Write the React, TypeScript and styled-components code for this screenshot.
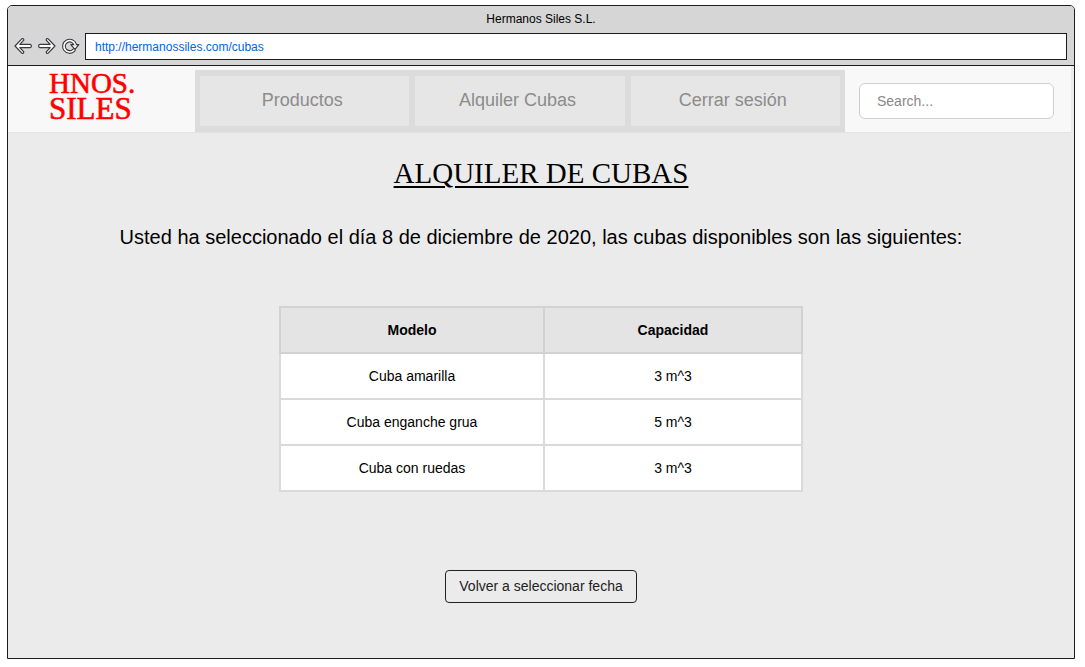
import React from "react";
import styled, { createGlobalStyle } from "styled-components";

const GlobalStyle = createGlobalStyle`
  * { box-sizing: border-box; }
  body {
    margin: 0;
    background: #fff;
    color: #000;
    font-family: "Liberation Sans", Arial, sans-serif;
    font-size: 14px;
  }
`;

const Window = styled.div`
  display: flex;
  flex-direction: column;
  min-height: calc(100vh - 13px);
  margin: 5px 10px 8px 7px;
  border: 1px solid #1c1c20;
  border-radius: 5px 5px 0 0;
  background: #ebebeb;
  overflow: hidden;
`;

const Chrome = styled.header`
  padding-bottom: 5px;
  background: #d6d6d6;
  border-bottom: 1px solid #1c1c20;
`;

const WindowTitle = styled.div`
  height: 27px;
  line-height: 26px;
  font-size: 12px;
  text-align: center;
`;

const AddressRow = styled.div`
  display: flex;
  align-items: center;
  padding: 0 7px 0 5px;
`;

const IconButton = styled.button`
  display: flex;
  width: 20px;
  height: 20px;
  margin: 0 4px 1px 0;
  padding: 0;
  border: 0;
  background: none;
`;

const AddressInput = styled.input`
  flex: 1;
  min-width: 0;
  height: 27px;
  padding: 0 9px;
  border: 1px solid #1c1c20;
  border-radius: 0;
  background: #fff;
  color: #0066dd;
  font: 12px "Liberation Sans", Arial, sans-serif;
  outline: none;
`;

const TopBar = styled.div`
  display: flex;
  align-items: flex-end;
  height: 67px;
  margin-right: 3px;
  background: #f8f8f8;
  border-bottom: 1px solid #e2e2e2;
`;

const Logo = styled.a`
  display: flex;
  width: 187px;
  height: 62px;
  padding-left: 41px;
`;

const LogoText = styled.text`
  fill: #ff0000;
  stroke: #ff0000;
  stroke-width: 0.6px;
  font-family: "Liberation Serif", "Times New Roman", serif;
`;

const Nav = styled.nav`
  display: flex;
  flex: 1;
  gap: 6px;
  padding: 6px 5px 6px 5px;
  background: #dcdcdc;
`;

const NavLink = styled.a`
  display: flex;
  flex: 1;
  align-items: center;
  justify-content: center;
  height: 50px;
  padding: 0 5px 2px 0;
  background: #e6e6e6;
  color: #8c8c8c;
  font-size: 18px;
  text-decoration: none;
`;

const SearchForm = styled.form`
  align-self: center;
  width: 226px;
  padding: 4px 17px 0 14px;
`;

const SearchInput = styled.input`
  display: block;
  width: 100%;
  height: 36px;
  padding: 0 17px;
  border: 1px solid #cfcfcf;
  border-radius: 6px;
  background: #fff;
  font: 14px "Liberation Sans", Arial, sans-serif;
  outline: none;
  &::placeholder { color: #888; opacity: 1; }
`;

const Content = styled.main`
  display: flex;
  flex: 1;
  flex-direction: column;
  align-items: center;
  padding: 20px 16px 24px;
`;

const Heading = styled.h1`
  margin: 0;
  font: 400 29px/40px "Liberation Serif", "Times New Roman", serif;
  text-decoration: underline;
  text-decoration-thickness: 2px;
  text-underline-offset: 3px;
`;

const Intro = styled.p`
  margin: 31px 0 56px;
  font-size: 20px;
  line-height: 26px;
  text-align: center;
`;

const Table = styled.table`
  width: 524px;
  max-width: 100%;
  border-collapse: collapse;
  table-layout: fixed;
  background: #fff;
`;

const Cell = styled.td`
  height: 46px;
  padding: 0;
  border: 2px solid #dadada;
  text-align: center;
`;

const HeadCell = styled(Cell).attrs({ as: "th", scope: "col" })<{ $wide?: boolean }>`
  width: ${(p) => (p.$wide ? "264px" : "auto")};
  border-color: #d2d2d2;
  background: #e4e4e4;
  font-weight: 700;
`;

const BackButton = styled.button`
  height: 33px;
  margin-top: 78px;
  padding: 0 13px 1px;
  border: 1px solid #222;
  border-radius: 4px;
  background: transparent;
  color: #222;
  font: 14px "Liberation Sans", Arial, sans-serif;
`;

const ArrowIcon = ({ forward = false }: { forward?: boolean }) => (
  <svg width="20" height="20" viewBox="0 0 20 20" aria-hidden="true">
    <path
      transform={forward ? "translate(20 0) scale(-1 1)" : undefined}
      d="M2 10 L8.8 2.8 Q10.8 2.2 10.8 4.2 L6.8 8.4 H17 Q18.4 8.6 18.4 10 Q18.4 11.4 17 11.6 H6.8 L10.8 15.8 Q10.8 17.8 8.8 17.2 Z"
      fill="#fff"
      stroke="#3a3a3e"
      strokeWidth="1.2"
      strokeLinejoin="round"
    />
  </svg>
);

const ReloadIcon = () => (
  <svg width="20" height="20" viewBox="0 0 20 20" aria-hidden="true">
    <path
      d="M12.8 14.2 A5.7 5.7 0 1 1 14.1 8.6"
      fill="none"
      stroke="#3a3a3e"
      strokeWidth="3.8"
      strokeLinecap="round"
    />
    <path
      d="M9.8 8.6 H17.8 L14 13.4 Z"
      fill="#fff"
      stroke="#3a3a3e"
      strokeWidth="1.2"
      strokeLinejoin="round"
    />
    <path
      d="M12.8 14.2 A5.7 5.7 0 1 1 14.1 8.6"
      fill="none"
      stroke="#fff"
      strokeWidth="1.6"
      strokeLinecap="round"
    />
  </svg>
);

const links = ["Productos", "Alquiler Cubas", "Cerrar sesión"];

const containers = [
  { model: "Cuba amarilla", capacity: "3 m^3" },
  { model: "Cuba enganche grua", capacity: "5 m^3" },
  { model: "Cuba con ruedas", capacity: "3 m^3" },
];

export default function App() {
  return (
    <>
      <GlobalStyle />
      <Window>
        <Chrome>
          <WindowTitle>Hermanos Siles S.L.</WindowTitle>
          <AddressRow>
            <IconButton type="button" aria-label="Atrás"><ArrowIcon /></IconButton>
            <IconButton type="button" aria-label="Adelante"><ArrowIcon forward /></IconButton>
            <IconButton type="button" aria-label="Recargar"><ReloadIcon /></IconButton>
            <AddressInput aria-label="Dirección" defaultValue="http://hermanossiles.com/cubas" />
          </AddressRow>
        </Chrome>
        <TopBar>
          <Logo href="#">
            <svg width="90" height="54" viewBox="0 0 90 54">
              <LogoText x="0" y="23" fontSize="29">HNOS.</LogoText>
              <LogoText x="0" y="49" fontSize="31">SILES</LogoText>
            </svg>
          </Logo>
          <Nav>
            {links.map((label) => <NavLink href="#" key={label}>{label}</NavLink>)}
          </Nav>
          <SearchForm role="search">
            <SearchInput type="text" aria-label="Search" placeholder="Search..." />
          </SearchForm>
        </TopBar>
        <Content>
          <Heading>ALQUILER DE CUBAS</Heading>
          <Intro>
            Usted ha seleccionado el día 8 de diciembre de 2020, las cubas disponibles son las siguientes:
          </Intro>
          <Table>
            <thead>
              <tr>
                <HeadCell $wide>Modelo</HeadCell>
                <HeadCell>Capacidad</HeadCell>
              </tr>
            </thead>
            <tbody>
              {containers.map((item) => (
                <tr key={item.model}>
                  <Cell>{item.model}</Cell>
                  <Cell>{item.capacity}</Cell>
                </tr>
              ))}
            </tbody>
          </Table>
          <BackButton type="button">Volver a seleccionar fecha</BackButton>
        </Content>
      </Window>
    </>
  );
}
